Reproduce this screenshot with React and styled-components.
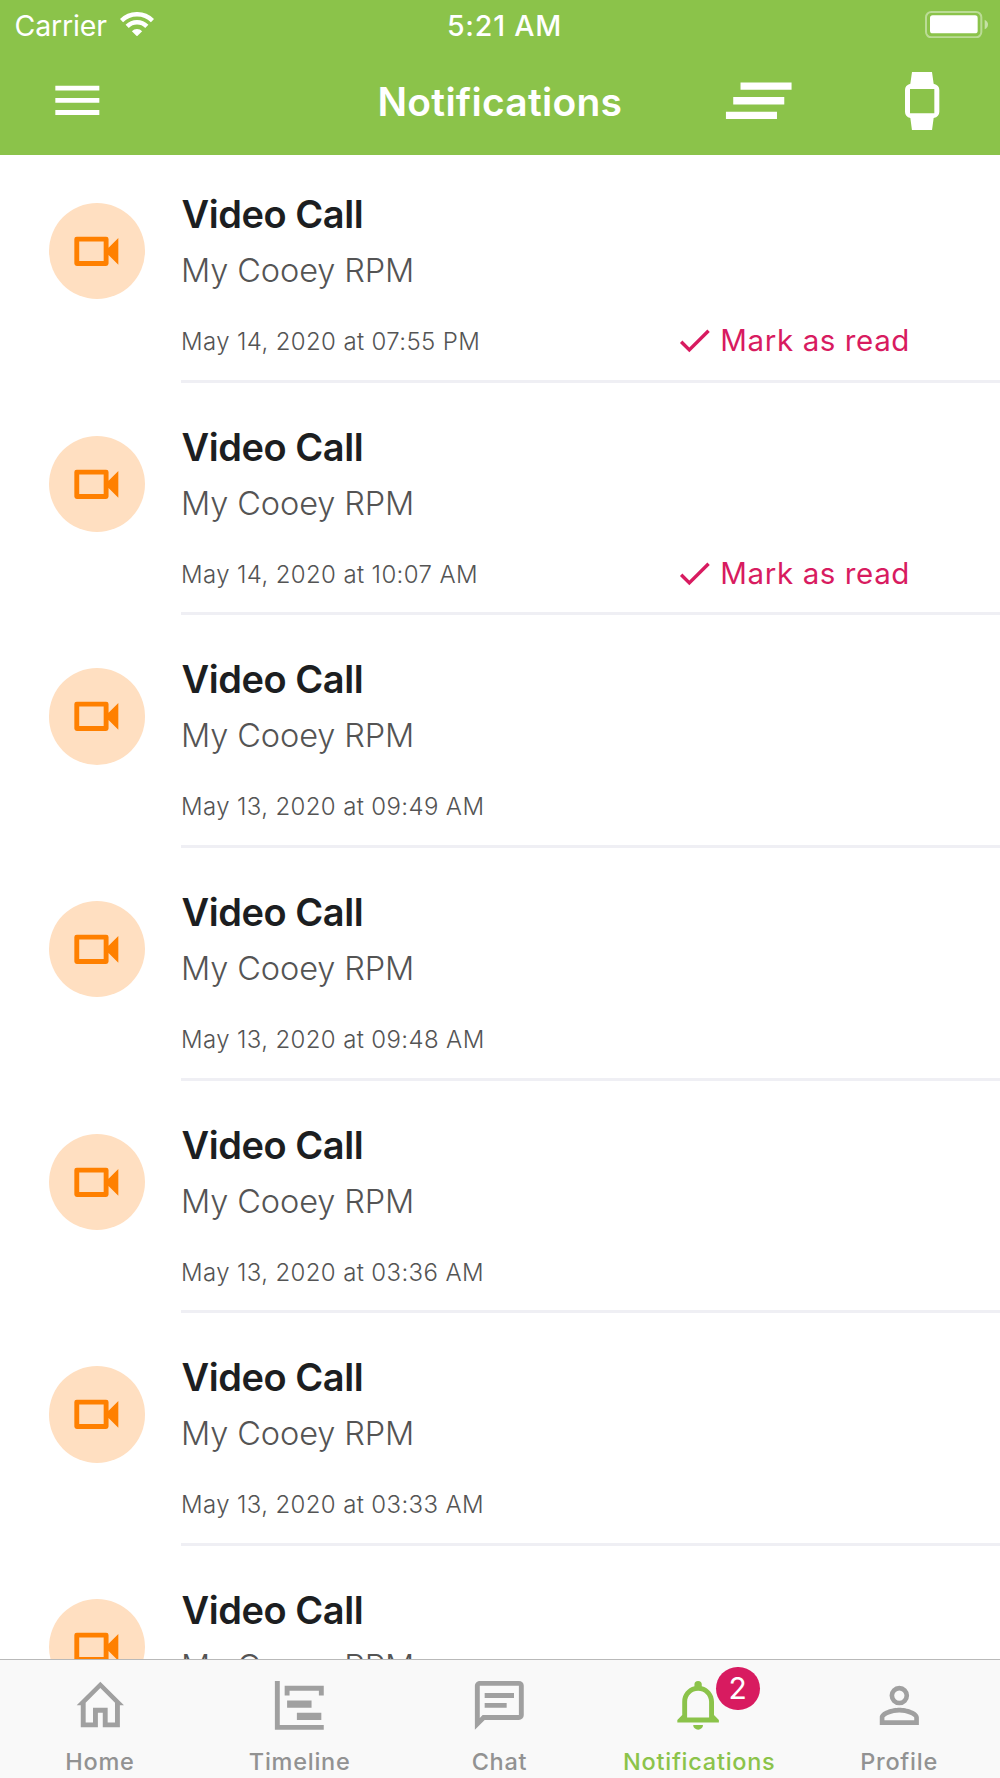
import React from 'react';
import styled, { createGlobalStyle, css } from 'styled-components';

const GlobalStyle = createGlobalStyle`
  * {
    box-sizing: border-box;
  }

  body {
    margin: 0;
    background: #fff;
    font-family: Inter, Roboto, "Liberation Sans", sans-serif;
  }
`;

const Screen = styled.div`
  display: flex;
  flex-direction: column;
  width: 1000px;
  height: 1778px;
  overflow: hidden;
  background: #fff;
`;

const HeaderWrapper = styled.header`
  flex: none;
  height: 154.67px;
  background: #8bc34a;
  color: #fff;

  svg {
    display: block;
  }
`;

const StatusBar = styled.div`
  display: grid;
  grid-template-columns: 1fr auto 1fr;
  align-items: center;
  height: 48.6px;
  padding: 0 12px 0 14.5px;
  font-size: 28.5px;
  line-height: 34px;
`;

const Carrier = styled.div`
  display: flex;
  align-items: center;
  gap: 13.5px;
  letter-spacing: -0.15px;

  span {
    padding-top: 3px;
  }
`;

const Time = styled.time`
  padding: 3px 0 0 6.5px;
  font-weight: 500;
  letter-spacing: 0.8px;
`;

const Battery = styled.div`
  justify-self: end;
`;

const NavBar = styled.div`
  display: grid;
  grid-template-columns: 1fr auto 1fr;
  align-items: center;
  height: 106.07px;
  padding: 0 60.3px 1.67px 48px;
`;

const Title = styled.h1`
  margin: 0;
  padding: 2px 0 0 12px;
  font-size: 39px;
  font-weight: 600;
  line-height: 48px;
  letter-spacing: 0.25px;
`;

const Actions = styled.div`
  display: flex;
  align-items: center;
  justify-content: flex-end;
  gap: 103px;
`;

const IconButton = styled.button`
  justify-self: start;
  padding: 0;
  border: 0;
  background: none;
  color: inherit;
`;

const List = styled.main`
  flex: 1;
  min-height: 0;
  overflow: hidden;
`;

const Items = styled.div`
  margin-top: -4.67px;
`;

const Item = styled.article`
  display: flex;
  gap: 36px;
  height: 232.67px;
  padding-left: 48.6px;
`;

const Avatar = styled.div`
  display: flex;
  flex: none;
  align-items: center;
  justify-content: center;
  width: 96.4px;
  height: 96.4px;
  margin-top: 53.1px;
  border-radius: 50%;
  background: #ffdfc1;
  color: #ff8000;
`;

const Content = styled.div`
  flex: 1;
  padding-top: 40px;
  border-bottom: 3px solid #efeff4;
`;

const Name = styled.h2`
  margin: 0 0 11px 0.5px;
  color: #1c1e21;
  font-size: 38px;
  font-weight: 600;
  line-height: 48px;
  letter-spacing: -0.45px;
`;

const Source = styled.p`
  margin: 0 0 29px;
  color: #545454;
  font-size: 32.5px;
  font-weight: 300;
  line-height: 44px;
  letter-spacing: -0.1px;
`;

const ItemFooter = styled.div`
  display: flex;
  align-items: center;
  justify-content: space-between;
  height: 40px;
  padding-right: 90px;
`;

const DateText = styled.time`
  color: #545454;
  font-size: 24px;
  font-weight: 300;
  line-height: 40px;
  letter-spacing: 0.37px;
`;

const MarkRead = styled.button`
  display: flex;
  align-items: center;
  gap: 5px;
  padding: 0 0 3.4px;
  border: 0;
  background: none;
  color: #d81b60;
  font: inherit;
  font-size: 29.5px;
  line-height: 40px;
  letter-spacing: 0.6px;
`;

const TabBarWrapper = styled.nav`
  display: flex;
  flex: none;
  height: 119px;
  padding-right: 1px;
  border-top: 1px solid #b9b9b9;
  background: #f9f9f9;
`;

const Tab = styled.a`
  display: flex;
  flex: 1 0 0;
  flex-direction: column;
  align-items: center;
  gap: 12.2px;
  padding-top: 16.4px;
  color: #929292;
  font-size: 23.5px;
  font-weight: 450;
  line-height: 30px;
  letter-spacing: 0.74px;

  svg {
    display: block;
    color: #a0a0a0;
  }

  ${props => (props.$active && css`
    color: #8bc34a;

    svg {
      color: #8bc34a;
    }
  `)};
`;

const TabIcon = styled.div`
  position: relative;
`;

const Badge = styled.span`
  position: absolute;
  top: -9.7px;
  left: 46px;
  width: 43.6px;
  height: 43.6px;
  border-radius: 50%;
  background: #d81b60;
  color: #fff;
  font-size: 30px;
  font-weight: 400;
  line-height: 43.6px;
  letter-spacing: 0;
  text-align: center;
`;

const icons = {
  menu: 'M3,6H21V8H3V6M3,11H21V13H3V11M3,16H21V18H3V16Z',
  clearAll: 'M5,13H19V11H5M3,17H17V15H3M7,7V9H21V7',
  video: 'M15,8V16H5V8H15M16,6H4A1,1 0 0,0 3,7V17A1,1 0 0,0 4,18H16A1,1 0 0,0 17,17V13.5L21,17.5V6.5L17,10.5V7A1,1 0 0,0 16,6Z',
  check: 'M21,7L9,19L3.5,13.5L4.91,12.09L9,16.17L19.59,5.59L21,7Z',
  home: 'M9,19V13H15V19H18V10.91L12,4.91L6,10.91V19H9M21.67,12H20V21H13V15H11V21H4V12H2.33L12,2.33L21.67,12Z',
  timeline: 'M2,2H4V20H22V22H2V2M7,10H17V13H7V10M11,15H21V18H11V15M6,4H22V8H20V6H8V8H6V4Z',
  chat: 'M20,2A2,2 0 0,1 22,4V16A2,2 0 0,1 20,18H6L2,22V4C2,2.89 2.9,2 4,2H20M4,4V17.17L5.17,16H20V4H4M6,7H18V9H6V7M6,11H15V13H6V11Z',
  bell: 'M16,17H7V10.5C7,8 9,6 11.5,6C14,6 16,8 16,10.5M18,16V10.5C18,7.43 15.86,4.86 13,4.18V3.5A1.5,1.5 0 0,0 11.5,2A1.5,1.5 0 0,0 10,3.5V4.18C7.13,4.86 5,7.43 5,10.5V16L3,18V19H20V18M11.5,22A2,2 0 0,0 13.5,20H9.5A2,2 0 0,0 11.5,22Z',
  profile: 'M12,4A4,4 0 0,1 16,8A4,4 0 0,1 12,12A4,4 0 0,1 8,8A4,4 0 0,1 12,4M12,5.9A2.1,2.1 0 1,0 14.1,8A2.1,2.1 0 0,0 12,5.9M12,13C14.67,13 20,14.33 20,17V20H4V17C4,14.33 9.33,13 12,13M12,14.9C9,14.9 5.9,16.37 5.9,17V18.1H18.1V17C18.1,16.37 15,14.9 12,14.9Z',
};

const Icon = ({ name, size = 58.67 }) => (
  <svg width={size} height={size} viewBox="0 0 24 24" fill="currentColor">
    <path d={icons[name]} />
  </svg>
);

const WifiIcon = () => (
  <svg width="34" height="24.33" viewBox="-51 -73 102 73">
    <g fill="none" stroke="#fff" strokeWidth="13.5">
      <path d="M-46.5,-47.2A66.25,66.25 0 0,1 46.5,-47.2" />
      <path d="M-29.5,-30A42,42 0 0,1 29.5,-30" />
    </g>
    <path d="M0,0L-15.5,-15.5A22,22 0 0,1 15.5,-15.5Z" fill="#fff" />
  </svg>
);

const BatteryIcon = () => (
  <svg width="63" height="27.33" viewBox="0 0 189 82">
    <rect x="3" y="3" width="166" height="76" rx="16" fill="none" stroke="#fff" strokeWidth="6" opacity="0.42" />
    <rect x="15" y="13" width="143" height="54" rx="8" fill="#fff" />
    <path d="M179,26Q189,31 189,40.5Q189,50 179,55Z" fill="#fff" opacity="0.5" />
  </svg>
);

const WatchIcon = () => (
  <svg width="34.33" height="58.33" viewBox="0 0 103 175" fill="currentColor">
    <path
      fillRule="evenodd"
      d="M21,0H81L86,35Q103,39 103,54V119Q103,134 86,138L81,175H21L16,138Q0,134 0,119V54Q0,39 16,35ZM15,51V124H88V51Z"
    />
  </svg>
);

const notifications = [
  { id: 1, date: 'May 14, 2020 at 07:55 PM', unread: true },
  { id: 2, date: 'May 14, 2020 at 10:07 AM', unread: true },
  { id: 3, date: 'May 13, 2020 at 09:49 AM' },
  { id: 4, date: 'May 13, 2020 at 09:48 AM' },
  { id: 5, date: 'May 13, 2020 at 03:36 AM' },
  { id: 6, date: 'May 13, 2020 at 03:33 AM' },
  { id: 7 },
];

const tabs = [
  { label: 'Home', icon: 'home' },
  { label: 'Timeline', icon: 'timeline' },
  { label: 'Chat', icon: 'chat' },
  { label: 'Notifications', icon: 'bell', active: true, count: 2 },
  { label: 'Profile', icon: 'profile' },
];

const Header = () => (
  <HeaderWrapper>
    <StatusBar>
      <Carrier>
        <span>Carrier</span>
        <WifiIcon />
      </Carrier>
      <Time>5:21 AM</Time>
      <Battery>
        <BatteryIcon />
      </Battery>
    </StatusBar>
    <NavBar>
      <IconButton>
        <Icon name="menu" />
      </IconButton>
      <Title>Notifications</Title>
      <Actions>
        <IconButton>
          <Icon name="clearAll" size={87.5} />
        </IconButton>
        <IconButton>
          <WatchIcon />
        </IconButton>
      </Actions>
    </NavBar>
  </HeaderWrapper>
);

const Notification = ({ date, unread }) => (
  <Item>
    <Avatar>
      <Icon name="video" />
    </Avatar>
    <Content>
      <Name>Video Call</Name>
      <Source>My Cooey RPM</Source>
      <ItemFooter>
        {date && <DateText>{date}</DateText>}
        {unread && (
          <MarkRead>
            <Icon name="check" size={40.9} />
            Mark as read
          </MarkRead>
        )}
      </ItemFooter>
    </Content>
  </Item>
);

const TabBar = () => (
  <TabBarWrapper>
    {tabs.map(({ label, icon, active, count }) => (
      <Tab key={label} $active={active}>
        <TabIcon>
          <Icon name={icon} />
          {count && <Badge>{count}</Badge>}
        </TabIcon>
        {label}
      </Tab>
    ))}
  </TabBarWrapper>
);

const App = () => (
  <Screen>
    <GlobalStyle />
    <Header />
    <List>
      <Items>
        {notifications.map(({ id, date, unread }) => (
          <Notification key={id} date={date} unread={unread} />
        ))}
      </Items>
    </List>
    <TabBar />
  </Screen>
);

export default App;
